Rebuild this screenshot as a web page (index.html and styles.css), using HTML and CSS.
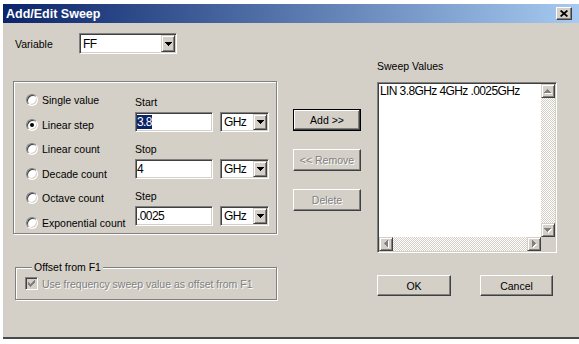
FILE: index.html
```html
<!DOCTYPE html>
<html lang="en">
  <head>
    <meta charset="UTF-8" />
    <meta name="viewport" content="width=device-width, initial-scale=1.0" />
    <title>Add/Edit Sweep</title>
    <link rel="stylesheet" href="styles.css">
  </head>
  <body>
    <div class="window">
      <!-- [1] Title bar -->
      <div class="titlebar">
        <span class="title">Add/Edit Sweep</span>
        <span class="close-btn">
          <svg width="8" height="7" viewBox="0 0 8 7" aria-hidden="true">
            <path d="M0.6 0.5 L7.4 6.5 M7.4 0.5 L0.6 6.5" stroke="#000" stroke-width="1.7" fill="none" />
          </svg>
        </span>
      </div>

      <!-- [2] Dialog body -->
      <div class="dialog">
        <div class="col-left">
          <div class="variable-row">
            <span class="label">Variable</span>
            <div class="combo combo-variable">
              <span class="combo-text">FF</span>
              <span class="drop-btn">
                <svg width="7" height="4" viewBox="0 0 7 4"><path d="M0 0h7v1H0zM1 1h5v1H1zM2 2h3v1H2zM3 3h1v1H3z" /></svg>
              </span>
            </div>
          </div>

          <div class="group sweep-type">
            <div class="radios">
              <div class="radio-row"><span class="radio"></span>Single value</div>
              <div class="radio-row"><span class="radio checked"></span>Linear step</div>
              <div class="radio-row"><span class="radio"></span>Linear count</div>
              <div class="radio-row"><span class="radio"></span>Decade count</div>
              <div class="radio-row"><span class="radio"></span>Octave count</div>
              <div class="radio-row"><span class="radio"></span>Exponential count</div>
            </div>

            <div class="fields">
              <div class="field">
                <span class="field-label">Start</span>
                <div class="field-row">
                  <div class="textbox"><span class="selected">3.8</span></div>
                  <div class="combo combo-unit">
                    <span class="combo-text">GHz</span>
                    <span class="drop-btn">
                      <svg width="7" height="4" viewBox="0 0 7 4"><path d="M0 0h7v1H0zM1 1h5v1H1zM2 2h3v1H2zM3 3h1v1H3z" /></svg>
                    </span>
                  </div>
                </div>
              </div>
              <div class="field">
                <span class="field-label">Stop</span>
                <div class="field-row">
                  <div class="textbox">4</div>
                  <div class="combo combo-unit">
                    <span class="combo-text">GHz</span>
                    <span class="drop-btn">
                      <svg width="7" height="4" viewBox="0 0 7 4"><path d="M0 0h7v1H0zM1 1h5v1H1zM2 2h3v1H2zM3 3h1v1H3z" /></svg>
                    </span>
                  </div>
                </div>
              </div>
              <div class="field">
                <span class="field-label">Step</span>
                <div class="field-row">
                  <div class="textbox">.0025</div>
                  <div class="combo combo-unit">
                    <span class="combo-text">GHz</span>
                    <span class="drop-btn">
                      <svg width="7" height="4" viewBox="0 0 7 4"><path d="M0 0h7v1H0zM1 1h5v1H1zM2 2h3v1H2zM3 3h1v1H3z" /></svg>
                    </span>
                  </div>
                </div>
              </div>
            </div>
          </div>
        </div>

        <div class="col-mid">
          <div class="btn default">Add &gt;&gt;</div>
          <div class="btn disabled">&lt;&lt; Remove</div>
          <div class="btn disabled">Delete</div>
        </div>

        <div class="col-right">
          <span class="label">Sweep Values</span>
          <div class="listbox">
            <div class="list-area">
              <div class="list-item">LIN 3.8GHz 4GHz .0025GHz</div>
            </div>
            <div class="vscroll">
              <span class="scroll-btn">
                <svg width="8" height="5" viewBox="0 0 8 5"><path fill="#fff" d="M4 1h1v1H4zM3 2h3v1H3zM2 3h5v1H2zM1 4h7v1H1z" /><path fill="#808080" d="M3 0h1v1H3zM2 1h3v1H2zM1 2h5v1H1zM0 3h7v1H0z" /></svg>
              </span>
              <span class="track"></span>
              <span class="scroll-btn">
                <svg width="8" height="5" viewBox="0 0 8 5"><path fill="#fff" d="M1 1h7v1H1zM2 2h5v1H2zM3 3h3v1H3zM4 4h1v1H4z" /><path fill="#808080" d="M0 0h7v1H0zM1 1h5v1H1zM2 2h3v1H2zM3 3h1v1H3z" /></svg>
              </span>
            </div>
            <div class="hscroll">
              <span class="scroll-btn">
                <svg width="5" height="8" viewBox="0 0 5 8"><path fill="#fff" d="M1 4h1v1H1zM2 3h1v3H2zM3 2h1v5H3zM4 1h1v7H4z" /><path fill="#808080" d="M0 3h1v1H0zM1 2h1v3H1zM2 1h1v5H2zM3 0h1v7H3z" /></svg>
              </span>
              <span class="track"></span>
              <span class="scroll-btn">
                <svg width="5" height="8" viewBox="0 0 5 8"><path fill="#fff" d="M1 1h1v7H1zM2 2h1v5H2zM3 3h1v3H3zM4 4h1v1H4z" /><path fill="#808080" d="M0 0h1v7H0zM1 1h1v5H1zM2 2h1v3H2zM3 3h1v1H3z" /></svg>
              </span>
            </div>
            <div class="corner"></div>
          </div>
        </div>

        <fieldset class="offset">
          <legend>Offset from F1</legend>
          <div class="check-row">
            <span class="checkbox">
              <svg width="7" height="7" viewBox="0 0 7 7"><path fill="#808080" d="M6 0h1v3H6zM5 1h1v3H5zM4 2h1v3H4zM3 3h1v3H3zM2 4h1v3H2zM1 3h1v3H1zM0 2h1v3H0z" /></svg>
            </span>
            <span class="disabled-text">Use frequency sweep value as offset from F1</span>
          </div>
        </fieldset>

        <div class="actions">
          <div class="btn btn-ok">OK</div>
          <div class="btn btn-cancel">Cancel</div>
        </div>
      </div>
    </div>
  </body>
</html>
```

FILE: styles.css
```css
/*
  Global styles
*/

* {
  margin: 0;
  padding: 0;
  box-sizing: border-box;
}
:root {
  --face: #d4d0c8;
  --shadow: #808080;
  --dark: #404040;
  --light: #fff;
  --navy: #0a246a;
}
body {
  overflow: hidden;
  color: #000;
  font-size: 10.5px;
  line-height: 12px;
  background-color: #fff;
  font-family: "Liberation Sans", Arial, sans-serif;
}

/*
  Bevels
*/

.combo,
.textbox,
.listbox,
.checkbox {
  border: 1px solid;
  border-color: var(--shadow) var(--light) var(--light) var(--shadow);
  box-shadow: inset 1px 1px var(--dark), inset -1px -1px var(--face);
}
.group,
.offset {
  border: 1px solid var(--shadow);
  box-shadow: inset 1px 1px var(--light), 1px 1px var(--light);
}

/*
  Window
*/

.window {
  width: 576px;
  margin: 4px 0 0 3px;
  background-color: var(--face);
  border-bottom: 2px solid #4a4a4a;
}
.titlebar {
  height: 19px;
  display: flex;
  align-items: center;
  padding: 0 7px 0 3px;
  justify-content: space-between;
  background: linear-gradient(to right, var(--navy), #a6caf0);
}
.title {
  color: #fff;
  font-size: 12.5px;
  font-weight: bold;
}
.close-btn {
  width: 16px;
  height: 13px;
  display: grid;
  place-items: center;
  background-color: var(--face);
  border: 1px solid;
  border-color: var(--light) var(--dark) var(--dark) var(--light);
  box-shadow: inset -1px -1px var(--shadow);
}

/*
  Dialog layout
*/

.dialog {
  height: 314px;
  display: grid;
  column-gap: 16px;
  align-items: start;
  align-content: start;
  padding: 10px 0 0 10px;
  grid-template-rows: auto auto;
  grid-template-columns: 264px 68px 180px;
}
.variable-row {
  height: 21px;
  display: flex;
  align-items: center;
}
.variable-row .label {
  width: 66px;
  padding-left: 2px;
}

/* [1] Combo boxes and text boxes */
.combo {
  display: flex;
  padding: 1px;
  background-color: #fff;
}
.combo-variable {
  width: 98px;
  height: 21px;
}
.combo-unit {
  width: 49px;
  height: 20px;
}
.combo-text,
.textbox,
.list-item {
  font-size: 12px;
  white-space: nowrap;
  letter-spacing: -0.6px;
}
.combo-text {
  flex: 1;
  display: flex;
  align-items: center;
  padding-left: 2px;
}
.drop-btn {
  width: 14px;
  display: grid;
  place-items: center;
  background-color: var(--face);
  border: 1px solid;
  border-color: var(--face) var(--dark) var(--dark) var(--face);
  box-shadow: inset 1px 1px var(--light), inset -1px -1px var(--shadow);
}
.textbox {
  width: 78px;
  height: 20px;
  display: flex;
  padding: 0 1px;
  align-items: center;
  background-color: #fff;
}
.textbox .selected {
  color: #fff;
  line-height: 14px;
  background-color: var(--navy);
}

/* [2] Sweep type group */
.sweep-type {
  height: 153px;
  display: grid;
  margin-top: 27px;
  padding-left: 12px;
  grid-template-columns: 109px 1fr;
}
.radios {
  padding-top: 6px;
}
.radio-row {
  gap: 4px;
  height: 24.5px;
  display: flex;
  align-items: center;
}
.radio {
  flex: none;
  width: 12px;
  height: 12px;
  display: grid;
  place-items: center;
  border-radius: 50%;
  background-color: #fff;
  border: 1px solid;
  border-color: var(--shadow) var(--light) var(--light) var(--shadow);
  box-shadow: inset 1px 1px var(--dark), inset -1px -1px var(--face);
}
.radio.checked::after {
  content: "";
  width: 4px;
  height: 4px;
  border-radius: 50%;
  background-color: #000;
}
.fields {
  gap: 11px;
  display: flex;
  padding-top: 14px;
  flex-direction: column;
}
.field-label {
  display: block;
  margin-bottom: 4px;
}
.field-row {
  gap: 7px;
  display: flex;
}

/* [3] Buttons */
.col-mid {
  gap: 18px;
  display: flex;
  padding-top: 76px;
  flex-direction: column;
}
.btn {
  height: 22px;
  display: grid;
  place-items: center;
  border: 1px solid;
  border-color: var(--light) var(--dark) var(--dark) var(--light);
  box-shadow: inset -1px -1px var(--shadow);
}
.btn.default {
  border-color: #000;
  box-shadow: inset -1px -1px var(--dark), inset 1px 1px var(--light),
    inset -2px -2px var(--shadow);
}
.btn.disabled,
.disabled-text {
  color: var(--shadow);
  text-shadow: 1px 1px 0 var(--light);
}

/* [4] Sweep values list */
.col-right {
  padding-top: 27px;
}
.listbox {
  height: 171px;
  display: grid;
  padding: 1px;
  margin-top: 10px;
  background-color: #fff;
  grid-template-rows: 1fr 14px;
  grid-template-columns: 1fr 14px;
}
.list-area {
  overflow: hidden;
}
.list-item {
  line-height: 15px;
  padding-left: 1px;
}
.vscroll,
.hscroll {
  display: flex;
}
.vscroll {
  flex-direction: column;
}
.scroll-btn {
  flex: none;
  width: 14px;
  height: 14px;
  display: grid;
  place-items: center;
  background-color: var(--face);
  border: 1px solid;
  border-color: var(--face) var(--dark) var(--dark) var(--face);
  box-shadow: inset 1px 1px var(--light), inset -1px -1px var(--shadow);
}
.track {
  flex: 1;
  background-color: #fff;
  background-size: 2px 2px;
  background-image: repeating-conic-gradient(var(--face) 0 25%, #fff 0 50%);
}
.corner {
  background-color: var(--face);
}

/* [5] Offset group and actions */
.offset {
  width: 262px;
  margin: 8px 0 0 2px;
  padding: 4px 0 9px 9px;
}
.offset legend {
  padding: 0 2px;
  margin-left: 7px;
  background-color: var(--face);
}
.check-row {
  gap: 4px;
  height: 13px;
  display: flex;
  align-items: center;
}
.checkbox {
  width: 13px;
  height: 13px;
  display: grid;
  place-items: center;
  background-color: var(--face);
}
.actions {
  display: flex;
  margin-top: 22px;
  padding-right: 4px;
  grid-column: 3;
  justify-content: space-between;
}
.btn-ok {
  width: 74px;
  height: 21px;
}
.btn-cancel {
  width: 73px;
  height: 21px;
}
```
